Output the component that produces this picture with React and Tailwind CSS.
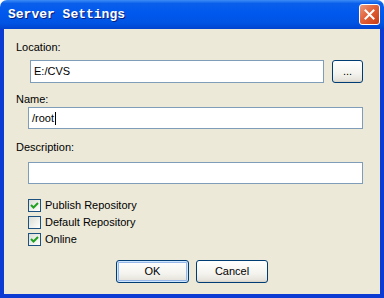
import React from 'react'

const font = { fontFamily: '"Liberation Sans", Arial, sans-serif' }

function CheckRow({ label, checked }) {
  return (
    <div className="flex h-[17px] items-start">
      <div className="mt-[1px] flex h-[13px] w-[13px] items-center justify-center border border-[#1C5180] bg-[linear-gradient(135deg,#DCDCD7_0%,#F4F4F0_70%,#FFFFFF_100%)]">
        {checked && (
          <svg width="9" height="9" viewBox="0 0 9 9">
            <path d="M1 4 L3.5 6.5 L8 2" fill="none" stroke="#21A121" strokeWidth="2" />
          </svg>
        )}
      </div>
      <span className="ml-[4px] text-[11px] leading-[15px] text-black">{label}</span>
    </div>
  )
}

function XPButton({ children, isDefault, className }) {
  return (
    <button
      className={
        'flex h-[23px] items-center justify-center rounded-[3px] border border-[#003C74] bg-[linear-gradient(to_bottom,#FFFFFF_0%,#F4F3EE_60%,#E6E4DC_90%,#D6D0C5_100%)] text-[11px] text-black ' +
        (isDefault ? 'shadow-[inset_0_0_0_1px_#CEE7FF,inset_0_0_0_2px_#98B8EA] ' : '') +
        className
      }
    >
      {children}
    </button>
  )
}

export default function App() {
  return (
    <div className="flex h-[298px] w-[384px] flex-col" style={font}>
      {/* Title bar */}
      <div className="flex h-[29px] items-center justify-between rounded-t-[7px] bg-[linear-gradient(to_bottom,#3D8CF7_0%,#0A5FEA_12%,#0058EE_45%,#0054E3_80%,#0043CF_100%)] pl-[8px] pr-[4px]">
        <span
          className="text-[13px] font-bold text-white [text-shadow:1px_1px_0_#0A1E7A]"
          style={{ fontFamily: '"Liberation Mono", "DejaVu Sans Mono", monospace' }}
        >
          Server Settings
        </span>
        <div className="flex h-[21px] w-[21px] items-center justify-center rounded-[3px] border border-white bg-[linear-gradient(135deg,#EA9A7C_0%,#E1623A_45%,#C83C14_100%)]">
          <svg width="11" height="11" viewBox="0 0 11 11">
            <path d="M1.5 1.5 L9.5 9.5 M9.5 1.5 L1.5 9.5" stroke="white" strokeWidth="2" strokeLinecap="square" />
          </svg>
        </div>
      </div>

      {/* Body */}
      <div className="flex flex-1 flex-col border-x-4 border-b-4 border-[#0B3BD3] bg-[#ECE9D8] pl-[12px] pr-[17px] pt-[12px]">
        <div className="h-[13px] text-[11px] leading-[13px] text-black">Location:</div>
        <div className="mt-[6px] flex h-[23px] items-center gap-[8px] pl-[14px]">
          <div className="flex h-[23px] flex-1 items-center border border-[#7F9DB9] bg-white px-[3px] text-[11px] text-black">
            E:/CVS
          </div>
          <XPButton className="h-[22px] w-[31px]">...</XPButton>
        </div>

        <div className="mt-[10px] h-[13px] text-[11px] leading-[13px] text-black">Name:</div>
        <div className="ml-[12px] mt-[1px] flex h-[22px] items-center border border-[#7F9DB9] bg-white px-[3px] text-[11px] text-black">
          /root<span className="ml-[1px] h-[13px] w-[1px] bg-black"></span>
        </div>

        <div className="mt-[12px] h-[13px] text-[11px] leading-[13px] text-black">Description:</div>
        <div className="ml-[12px] mt-[8px] h-[22px] border border-[#7F9DB9] bg-white"></div>

        <div className="ml-[12px] mt-[14px] flex flex-col">
          <CheckRow label="Publish Repository" checked />
          <CheckRow label="Default Repository" />
          <CheckRow label="Online" checked />
        </div>

        <div className="mt-[11px] flex justify-center gap-[7px] pl-[5px]">
          <XPButton isDefault className="w-[73px]">OK</XPButton>
          <XPButton className="w-[72px]">Cancel</XPButton>
        </div>
      </div>
    </div>
  )
}
